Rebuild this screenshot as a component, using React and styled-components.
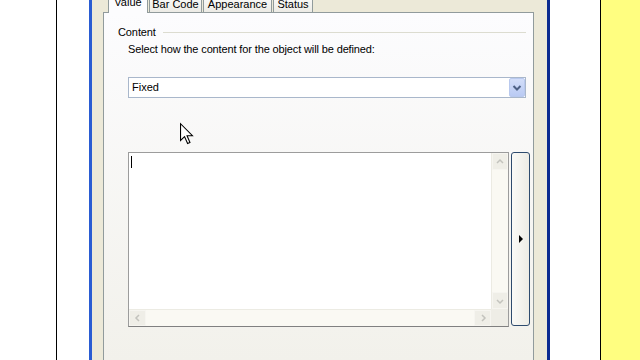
import React from 'react';
import styled, { createGlobalStyle } from 'styled-components';

const Global = createGlobalStyle`
  html, body { margin: 0; padding: 0; background: #fff; }
  body {
    width: 640px; height: 360px; overflow: hidden;
    font-family: "Liberation Sans", Arial, sans-serif;
    font-size: 11px; color: #000;
  }
  #root { width: 640px; height: 360px; }
`;

const Screen = styled.div`
  position: relative;
  display: flex;
  width: 640px;
  height: 360px;
  overflow: hidden;
  background: #fff;
`;

const Strip = styled.div`
  flex: 0 0 ${p => p.$w}px;
  min-width: 0;
  background: ${p => p.$bg};
`;

const Window = styled.div`
  flex: 0 0 461px;
  min-width: 0;
  box-sizing: border-box;
  border-left: 3px solid #2A5CD2;
  border-right: 3px solid #0B2B90;
  background: #ECE9D8;
  padding: 0 13px 0 11px;
  display: flex;
  flex-direction: column;
`;

const TabStrip = styled.div`
  display: flex;
  align-items: flex-end;
  gap: 1px;
  height: 20px;
  margin-top: -8px;
  padding-left: 5px;
`;

const Tab = styled.div`
  position: relative;
  z-index: ${p => (p.$active ? 1 : 0)};
  box-sizing: border-box;
  width: ${p => p.$w}px;
  height: ${p => (p.$active ? 21 : 20)}px;
  margin-bottom: ${p => (p.$active ? -1 : 0)}px;
  padding-bottom: ${p => (p.$active ? 4 : 1)}px;
  display: flex;
  align-items: flex-end;
  justify-content: center;
  border: 1px solid #919B9C;
  border-bottom: none;
  border-radius: 3px 3px 0 0;
  background: ${p => (p.$active ? '#FCFCFE' : 'linear-gradient(#FFFFFF, #ECEBE5)')};
  line-height: 13px;
  white-space: nowrap;
`;

const Panel = styled.div`
  flex: 1;
  min-width: 0;
  box-sizing: border-box;
  border: 1px solid #919B9C;
  border-bottom: none;
  background: linear-gradient(#FCFCFE, #F2F1EB);
  padding: 0 7px 0 14px;
  display: flex;
  flex-direction: column;
`;

const GroupHeader = styled.div`
  display: flex;
  align-items: center;
  height: 13px;
  margin-top: 13px;
  line-height: 13px;
  letter-spacing: -0.1px;
`;

const GroupRule = styled.div`
  flex: 1;
  height: 1px;
  margin-left: 7px;
  background: #DCDCD0;
`;

const Description = styled.div`
  margin: 4px 0 0 10px;
  line-height: 13px;
  letter-spacing: -0.13px;
  white-space: nowrap;
`;

const Combo = styled.div`
  box-sizing: border-box;
  height: 21px;
  margin: 21px 0 0 10px;
  border: 1px solid #A9B7CB;
  background: #fff;
  display: flex;
  align-items: center;
`;

const ComboText = styled.span`
  flex: 1;
  padding-left: 3px;
  line-height: 13px;
`;

const ComboButton = styled.div`
  box-sizing: border-box;
  width: 16px;
  height: 19px;
  border: 1px solid #B9C9EE;
  border-radius: 2px;
  background: linear-gradient(#D3DEF9, #B9CAF3);
  display: flex;
  align-items: center;
  justify-content: center;
`;

const EditRow = styled.div`
  display: flex;
  align-items: flex-start;
  gap: 2px;
  margin: 54px -4px 0 10px;
`;

const TextBox = styled.div`
  flex: 0 0 381px;
  box-sizing: border-box;
  height: 175px;
  border: 1px solid #9C9C9C;
  border-bottom-color: #808080;
  background: #fff;
  display: grid;
  grid-template-columns: 1fr 17px;
  grid-template-rows: 1fr 17px;
`;

const TextArea = styled.div`
  padding: 3px 0 0 2px;
`;

const Caret = styled.div`
  width: 1px;
  height: 12px;
  background: #000;
`;

const ScrollTrack = styled.div`
  display: flex;
  flex-direction: ${p => (p.$vertical ? 'column' : 'row')};
  justify-content: space-between;
  background: #FAF9F3;
  border-${p => (p.$vertical ? 'left' : 'top')}: 1px solid #ECEBE3;
`;

const ScrollButton = styled.div`
  box-sizing: border-box;
  width: ${p => (p.$vertical ? 16 : 17)}px;
  height: ${p => (p.$vertical ? 17 : 16)}px;
  border: 1px solid #F6F5F0;
  background: #EFEEE7;
  display: flex;
  align-items: center;
  justify-content: center;
`;

const Corner = styled.div`
  background: #EEEDE6;
`;

const SideButton = styled.div`
  flex: 0 0 19px;
  box-sizing: border-box;
  height: 174px;
  border: 1px solid #2E4B6E;
  border-radius: 3px;
  background: linear-gradient(90deg, #FAFAF7, #EDECE5);
  display: flex;
  align-items: center;
  justify-content: center;
`;

const Triangle = styled.div`
  width: 0;
  height: 0;
  margin-left: 1px;
  border-left: 4px solid #000;
  border-top: 4px solid transparent;
  border-bottom: 4px solid transparent;
`;

const Pointer = styled.svg`
  position: absolute;
  left: 180px;
  top: 123px;
  overflow: visible;
`;

const Chevron = ({ dir }) => {
  const paths = {
    up: 'M2 6 L5 3 L8 6',
    down: 'M2 4 L5 7 L8 4',
    left: 'M6 2 L3 5 L6 8',
    right: 'M4 2 L7 5 L4 8',
  };
  return (
    <svg width="10" height="10" viewBox="0 0 10 10">
      <path d={paths[dir]} fill="none" stroke="#C3C3BD" strokeWidth="1.5" />
    </svg>
  );
};

const tabs = [
  { label: 'Value', w: 40, active: true },
  { label: 'Bar Code', w: 53 },
  { label: 'Appearance', w: 69 },
  { label: 'Status', w: 40 },
];

export default function App() {
  return (
    <>
      <Global />
      <Screen>
        <Strip $w={56} $bg="#fff" />
        <Strip $w={1} $bg="#000" />
        <Strip $w={32} $bg="#fff" />
        <Window>
          <TabStrip>
            {tabs.map(t => (
              <Tab key={t.label} $w={t.w} $active={t.active}>{t.label}</Tab>
            ))}
          </TabStrip>
          <Panel>
            <GroupHeader>
              Content
              <GroupRule />
            </GroupHeader>
            <Description>Select how the content for the object will be defined:</Description>
            <Combo>
              <ComboText>Fixed</ComboText>
              <ComboButton>
                <svg width="10" height="8" viewBox="0 0 10 8">
                  <path d="M1.5 2 L5 5.5 L8.5 2" fill="none" stroke="#4D6185" strokeWidth="2" />
                </svg>
              </ComboButton>
            </Combo>
            <EditRow>
              <TextBox>
                <TextArea><Caret /></TextArea>
                <ScrollTrack $vertical>
                  <ScrollButton $vertical><Chevron dir="up" /></ScrollButton>
                  <ScrollButton $vertical><Chevron dir="down" /></ScrollButton>
                </ScrollTrack>
                <ScrollTrack>
                  <ScrollButton><Chevron dir="left" /></ScrollButton>
                  <ScrollButton><Chevron dir="right" /></ScrollButton>
                </ScrollTrack>
                <Corner />
              </TextBox>
              <SideButton><Triangle /></SideButton>
            </EditRow>
          </Panel>
        </Window>
        <Strip $w={50} $bg="#fff" />
        <Strip $w={1} $bg="#000" />
        <Strip $w={39} $bg="#FFFE80" />
        <Pointer width="13" height="22" viewBox="0 0 12 20">
          <path d="M0.5 0.5 L0.5 16 L4.2 12.4 L7 18.8 L9.2 17.8 L6.5 11.6 L11.5 11.6 Z" fill="#fff" stroke="#000" strokeWidth="1" strokeLinejoin="miter" />
        </Pointer>
      </Screen>
    </>
  );
}
